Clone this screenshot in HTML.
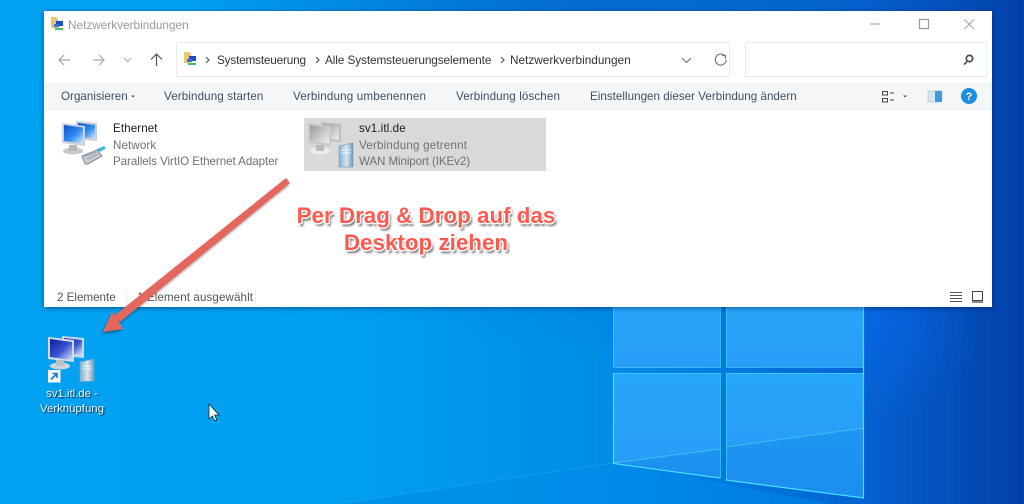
<!DOCTYPE html>
<html><head><meta charset="utf-8">
<style>
html,body{margin:0;padding:0;width:1024px;height:504px;overflow:hidden}
body{position:relative;font-family:"Liberation Sans",sans-serif;background:#0078d8}
.t{position:absolute;white-space:nowrap;line-height:16px}
.bg{position:absolute;left:0;top:0}
.tb{font-size:11.6px;color:#3d4f63;top:89px;letter-spacing:.03px}
.bc{font-size:11.8px;color:#333;top:52px}
.g{color:#707070;font-size:11.6px}
.k{color:#1a1a1a;font-size:11.6px}
.big{position:absolute;left:280px;width:292px;text-align:center;font-weight:bold;font-size:22.400px;line-height:24px;color:#ff5a50;white-space:nowrap;text-shadow:1.5px 0 0 #fff,-1.5px 0 0 #fff,0 1.5px 0 #fff,0 -1.5px 0 #fff,1px 1px 0 #fff,-1px -1px 0 #fff,1px -1px 0 #fff,-1px 1px 0 #fff,2px 3px 2px rgba(0,0,0,.6)}
.dt{position:absolute;color:#eef6fb;font-size:11.4px;line-height:15px;text-align:center;left:22px;width:100px;top:387px;text-shadow:1px 1px 1px rgba(0,0,0,.75)}
</style></head><body>
<svg class="bg" width="1024" height="504" viewBox="0 0 1024 504">
<defs>
<linearGradient id="b0" x1="0" y1="0" x2="1" y2="0"><stop offset="0" stop-color="#03a2f3"/><stop offset=".35" stop-color="#009ef0"/><stop offset=".58" stop-color="#008ee9"/><stop offset=".7" stop-color="#007ce0"/><stop offset=".85" stop-color="#0560d0"/><stop offset="1" stop-color="#0340a8"/></linearGradient>
<radialGradient id="tp" cx="600" cy="-60" r="420" gradientUnits="userSpaceOnUse"><stop offset="0" stop-color="#0558c0" stop-opacity=".75"/><stop offset="1" stop-color="#0558c0" stop-opacity="0"/></radialGradient>
<linearGradient id="pn" x1="0" y1="0" x2="0" y2="1"><stop offset="0" stop-color="#26a6fb"/><stop offset="1" stop-color="#2a9cf7"/></linearGradient>
<linearGradient id="lw" x1="0" y1="0" x2="0" y2="1"><stop offset="0" stop-color="#1f96f2"/><stop offset="1" stop-color="#1c8def"/></linearGradient>
<radialGradient id="gl" cx="880" cy="320" r="100" gradientUnits="userSpaceOnUse"><stop offset="0" stop-color="#0a6cf2" stop-opacity=".5"/><stop offset="1" stop-color="#0a6cf2" stop-opacity="0"/></radialGradient>
<linearGradient id="scr" x1="0" y1="0" x2="1" y2="1"><stop offset="0" stop-color="#0f4fd0"/><stop offset=".55" stop-color="#2f8cf0"/><stop offset="1" stop-color="#d8ecfb"/></linearGradient>
<linearGradient id="scr2" x1="0" y1="0" x2="1" y2="1"><stop offset="0" stop-color="#0c1ea0"/><stop offset=".55" stop-color="#3a55d0"/><stop offset="1" stop-color="#e0e4f8"/></linearGradient>
<linearGradient id="srv" x1="0" y1="0" x2="1" y2="0"><stop offset="0" stop-color="#7fb0d4"/><stop offset=".55" stop-color="#d8e6f0"/><stop offset="1" stop-color="#6c98ba"/></linearGradient>
<linearGradient id="gs" x1="0" y1="0" x2="1" y2="1"><stop offset="0" stop-color="#9a9a9a"/><stop offset="1" stop-color="#ededed"/></linearGradient>
<filter id="sh" x="-10%" y="-10%" width="120%" height="120%"><feDropShadow dx="-1" dy="2" stdDeviation="1.2" flood-color="#000" flood-opacity=".4"/></filter>
</defs>
<rect width="1024" height="504" fill="url(#b0)"/>
<rect width="1024" height="504" fill="url(#tp)"/>
<rect width="1024" height="504" fill="url(#gl)"/>
<path d="M336 504L613 463L830 504Z" fill="#008ae8" opacity=".55"/>
<rect x="613" y="300" width="107" height="67" fill="url(#pn)"/>
<rect x="726" y="300" width="138" height="67" fill="url(#pn)"/>
<path d="M613 373H720V449L613 463Z" fill="url(#pn)"/>
<path d="M726 373H864V428L726 447Z" fill="url(#pn)"/>
<path d="M613 463L720 449V478Z" fill="url(#lw)"/>
<path d="M726 447L864 428V498L726 480Z" fill="url(#lw)"/>
<g fill="none" stroke="#45d9fb" stroke-width="1" stroke-opacity=".65">
<path d="M613.500 300V367.500H720.500V300"/>
<path d="M726.500 300V367.500H864"/>
<path d="M613.500 373.500H720.500V478M726.500 480V373.500H864"/>
<path d="M613 463L720 449M726 447L864 428"/>
</g>
<path d="M613.500 373V463.500L720 478M726 480L863.500 498V300" stroke="#45e2fb" stroke-width="1.200" fill="none"/>
<path d="M336 504L613 463" stroke="#30c0f8" stroke-width="1" opacity=".3" fill="none"/>
</svg>

<div style="position:absolute;left:44px;top:11px;width:948px;height:296px;background:#fff;box-shadow:0 1px 5px rgba(0,0,40,.45)"></div>
<div style="position:absolute;left:44px;top:82px;width:948px;height:29px;background:#f5f6f7"></div>
<div style="position:absolute;left:176px;top:42px;width:552px;height:33px;border:1px solid #ececec;background:#fff"></div>
<div style="position:absolute;left:745px;top:42px;width:240px;height:33px;border:1px solid #ececec;background:#fff"></div>
<div style="position:absolute;left:304px;top:118px;width:242px;height:53px;background:#d9d9d9"></div>

<div class="t" style="left:68px;top:17px;font-size:11.8px;color:#9a9a9a">Netzwerkverbindungen</div>
<div class="t bc" style="left:217px;letter-spacing:-.2px">Systemsteuerung</div>
<div class="t bc" style="left:325px;letter-spacing:-.1px">Alle Systemsteuerungselemente</div>
<div class="t bc" style="left:510px">Netzwerkverbindungen</div>

<div class="t tb" style="left:61px">Organisieren</div>
<div class="t tb" style="left:164px;letter-spacing:.12px">Verbindung starten</div>
<div class="t tb" style="left:293px;letter-spacing:.17px">Verbindung umbenennen</div>
<div class="t tb" style="left:456px;letter-spacing:.12px">Verbindung löschen</div>
<div class="t tb" style="left:590px">Einstellungen dieser Verbindung ändern</div>

<div class="t k" style="left:113px;top:121px;letter-spacing:.1px">Ethernet</div>
<div class="t g" style="left:113px;top:138px;letter-spacing:.1px">Network</div>
<div class="t g" style="left:113px;top:154px;letter-spacing:-.06px">Parallels VirtIO Ethernet Adapter</div>
<div class="t k" style="left:359px;top:121px;letter-spacing:.1px">sv1.itl.de</div>
<div class="t g" style="left:359px;top:138px;letter-spacing:.2px">Verbindung getrennt</div>
<div class="t g" style="left:359px;top:154px;letter-spacing:-.1px">WAN Miniport (IKEv2)</div>

<div class="t g" style="left:57px;top:290px;color:#555">2 Elemente</div>
<div class="t g" style="left:137px;top:290px;color:#555;letter-spacing:.1px">1 Element ausgewählt</div>

<svg class="bg" width="1024" height="504" viewBox="0 0 1024 504" style="pointer-events:none">
<!-- title icon -->
<g>
<path d="M51 17h5l2 2v9h-7z" fill="#e8c878"/>
<rect x="56" y="21" width="7" height="5" fill="#1c4fc0"/><rect x="54" y="24" width="5" height="3" fill="#3b6ddc"/><rect x="55" y="28" width="8" height="2" fill="#4fc060"/>
<path d="M184 52h5l2 2v9h-7z" fill="#e8c878"/>
<rect x="189" y="56" width="7" height="5" fill="#1c4fc0"/><rect x="187" y="59" width="5" height="3" fill="#3b6ddc"/><rect x="188" y="63" width="8" height="2" fill="#4fc060"/>
</g>
<!-- nav -->
<g fill="none" stroke="#a6a6a6" stroke-width="1.200">
<path d="M70 60H59M64 55l-5 5 5 5"/>
<path d="M93 60H104M99 55l5 5-5 5"/>
<path d="M124 58l3.500 3.500 3.500-3.500" stroke="#b5b5b5"/>
<path d="M156.500 66V54M151 59.500l5.500-5.500 5.500 5.500" stroke="#555"/>
<path d="M206 57l3 3-3 3M316 57l3 3-3 3M501 57l3 3-3 3" stroke="#555"/>
<path d="M682 58l4.500 4.500 4.500-4.500" stroke="#777"/>
<path d="M725 56a5.500 5.500 0 1 0 1.300 4" stroke="#777"/>
<path d="M722 55.500h3.500V59" stroke="#777"/>
<path d="M870 24h10" stroke="#aaa"/>
<rect x="919.500" y="19.500" width="9" height="9" stroke="#999"/>
<path d="M964.500 19.500l9.500 9.500M974 19.500l-9.500 9.500" stroke="#aaa"/>
</g>
<g fill="none" stroke="#555" stroke-width="1.800"><circle cx="969.500" cy="58.500" r="3.200"/><path d="M967 61.500l-3 3"/></g>
<path d="M131 95.500h4l-2 2z" fill="#555"/>
<path d="M903 95.500h4l-2 2z" fill="#555"/>
<!-- view icons -->
<g fill="none" stroke="#444" stroke-width="1"><rect x="882.500" y="91.500" width="5" height="3.500"/><rect x="882.500" y="98.500" width="5" height="3.500"/><path d="M890 93h4M890 100h4"/></g>
<rect x="928" y="91" width="14" height="11" fill="#d8e6f2" stroke="#aab8c4" stroke-width=".5"/><rect x="935" y="91" width="7" height="11" fill="#3f9ae0"/>
<circle cx="969" cy="96" r="8" fill="#1a8ee0"/>
<text x="969" y="100" font-family="Liberation Sans,sans-serif" font-size="11" font-weight="bold" fill="#fff" text-anchor="middle">?</text>
<!-- statusbar -->
<path d="M126.500 290v14M255.500 290v14" stroke="#eee"/>
<g stroke="#555"><path d="M950 292.500h12M950 295.500h12M950 298.500h12M950 301.500h12"/></g>
<rect x="972.500" y="291.500" width="10" height="9" fill="#fff" stroke="#444"/><rect x="972" y="301" width="11" height="2" fill="#888"/>

<!-- Ethernet icon -->
<g>
<path d="M76 121l21 2v18l-21-2z" fill="#c9ced2"/>
<path d="M78 123l17 2v14l-17-2z" fill="url(#scr)"/>
<path d="M62 123l23 3v20l-23-3z" fill="#cfd3d6"/>
<path d="M64 125l19 2.500v16l-19-2.500z" fill="url(#scr)"/>
<ellipse cx="73" cy="151" rx="10" ry="3.500" fill="#c8cbce"/><rect x="69" y="145" width="8" height="6" fill="#b4b8bb"/>
<path d="M82 156l15-6 5 6-14 8h-3z" fill="#c4cad0" stroke="#727d86" stroke-width=".8"/>
<path d="M85 156l11-4M87 159l11-5" stroke="#8d98a0" stroke-width=".7"/>
<path d="M97 151l8-3.500" stroke="#4fb4dc" stroke-width="3.500"/>
</g>
<!-- VPN gray icon -->
<g>
<path d="M321 122l20 2v18l-20-2z" fill="#bdbdbd"/><path d="M323 124l16 2v14l-16-2z" fill="url(#gs)"/>
<path d="M308 123l23 3v20l-23-3z" fill="#c9c9c9"/><path d="M310 125l19 2.500v16l-19-2.500z" fill="url(#gs)"/>
<ellipse cx="320" cy="151" rx="10" ry="3.500" fill="#ececec"/><rect x="316" y="145" width="8" height="6" fill="#bbb"/>
<path d="M339 146l14-3v24h-14z" fill="url(#srv)" stroke="#6d8fae" stroke-width=".5"/>
<path d="M341 150h10M341 153h10" stroke="#fff" stroke-opacity=".7"/>
</g>
<!-- desktop icon -->
<g>
<path d="M62 336l22 2v20l-22-2z" fill="#c8d8e0"/><path d="M64 338l18 2v15l-18-2z" fill="url(#scr2)"/>
<path d="M48 337l26 3v22l-26-3z" fill="#d2dce0"/><path d="M50 339l22 3v18l-22-3z" fill="url(#scr2)"/>
<ellipse cx="60" cy="366" rx="10" ry="3.500" fill="#cfd6d8"/><rect x="56" y="360" width="8" height="6" fill="#b8c0c4"/>
<path d="M80 362l14-3v22l-14 .5z" fill="url(#srv)" stroke="#8aa6ba" stroke-width=".5"/>
<path d="M82 366h10M82 369h10" stroke="#fff" stroke-opacity=".6"/>
<rect x="48" y="370" width="12.500" height="12.500" fill="#f4f8fb"/>
<path d="M51 379.500l5.500-5.500M52.500 373.500h4.500v4.500" stroke="#1a78d8" stroke-width="1.600" fill="none"/>
</g>
<!-- cursor -->
<path d="M209 404v15l3.500-3 2.300 5 2-1-2.200-5h4.400z" fill="#fff" stroke="#222" stroke-width=".8"/>
<!-- arrow -->
<g filter="url(#sh)" fill="#e4665c">
<path d="M286 178L290 183L120 322L114 316Z"/>
<path d="M103 332L112 312L116 317L119 322L123 329Z"/>
</g>
</svg>

<div class="big" style="top:204px">Per Drag &amp; Drop auf das</div>
<div class="big" style="top:231px">Desktop ziehen</div>
<div class="dt">sv1.itl.de -<br>Verknüpfung</div>
</body></html>
